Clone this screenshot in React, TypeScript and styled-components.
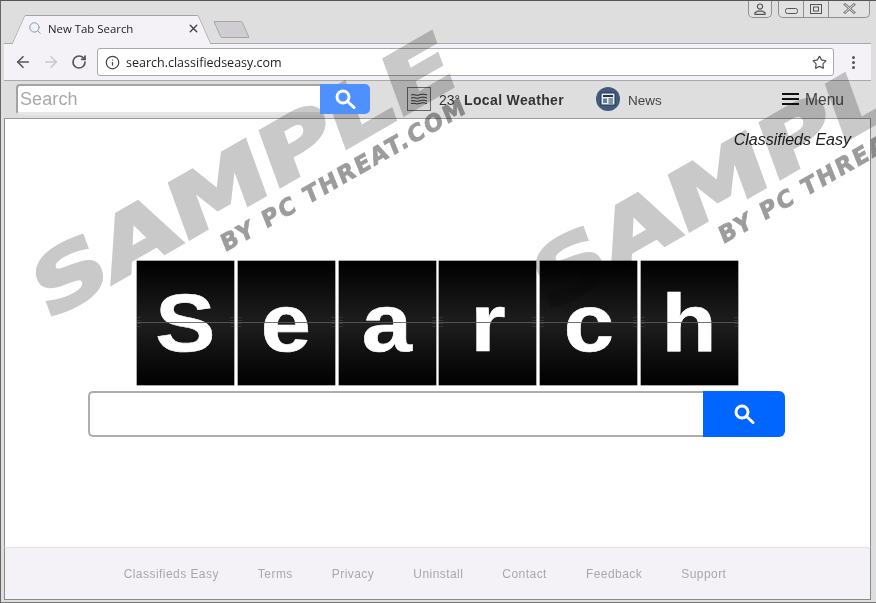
import React from "react";
import styled, { createGlobalStyle } from "styled-components";
import { ArrowLeft, ArrowRight, RotateCw, Info, Star, Search as SearchIcon, X } from "lucide-react";

const GlobalStyle = createGlobalStyle`
  html, body {
    margin: 0;
    padding: 0;
    background: #dedede;
  }
`;

const Window = styled.div`
  position: relative;
  width: 876px;
  height: 603px;
  box-sizing: border-box;
  overflow: hidden;
  display: flex;
  flex-direction: column;
  background: #dedede;
  border-top: 1px solid #555;
  border-left: 1px solid #666;
  border-bottom: 1px solid #777;
  font-family: "Liberation Sans", Arial, sans-serif;
`;

const TitleStrip = styled.div`
  height: 42px;
  flex: none;
  position: relative;
  display: flex;
  align-items: flex-end;
  padding-left: 21px;
  gap: 16px;
  box-sizing: border-box;
`;

const Tab = styled.div`
  position: relative;
  width: 179px;
  height: 28px;
  display: flex;
  align-items: center;
  gap: 6px;
  padding: 0 1px 2px 6px;
  box-sizing: border-box;
  z-index: 1;
  font-family: "Open Sans", sans-serif;
  font-size: 11.4px;
  color: #222;

  &::before,
  &::after {
    content: "";
    position: absolute;
    top: 0;
    bottom: -1px;
    width: 60%;
    background: #f5f2f7;
    border-top: 1px solid #a3a3a3;
    z-index: -1;
  }
  &::before {
    left: -4px;
    transform: skewX(-24deg);
    border-left: 1px solid #a3a3a3;
    border-radius: 2px 0 0 0;
  }
  &::after {
    right: -4px;
    transform: skewX(24deg);
    border-right: 1px solid #a3a3a3;
    border-radius: 0 2px 0 0;
  }
`;

const TabTitle = styled.span`
  flex: 1;
  white-space: nowrap;
`;

const NewTab = styled.div`
  width: 27px;
  height: 15px;
  margin-bottom: 5px;
  background: #cfcdd2;
  border: 1px solid #a6a6a6;
  border-radius: 2px;
  transform: skewX(24deg);
`;

const Controls = styled.div`
  position: absolute;
  top: -1px;
  right: 6px;
  display: flex;
  gap: 6px;
`;

const ControlGroup = styled.div`
  display: flex;
  height: 17px;
  border: 1px solid #8f8f8f;
  border-top: none;
  border-radius: 0 0 5px 5px;
  background: #e2e2e2;
`;

const ControlButton = styled.div<{ $width: number }>`
  width: ${(p) => p.$width}px;
  display: flex;
  align-items: center;
  justify-content: center;
  color: #555;

  & + & {
    border-left: 1px solid #8f8f8f;
  }
`;

const Toolbar = styled.div`
  height: 38px;
  flex: none;
  margin: 0 5px 0 3px;
  box-sizing: border-box;
  display: flex;
  align-items: center;
  background: #f5f2f7;
  border-top: 1px solid #a9a9a9;
  border-bottom: 1px solid #a9a9a9;
  padding: 0 0 0 9px;
  position: relative;
`;

const NavButton = styled.div<{ $mr: number }>`
  width: 20px;
  height: 20px;
  margin-right: ${(p) => p.$mr}px;
  display: flex;
  align-items: center;
  justify-content: center;
`;

const Omnibox = styled.div`
  width: 737px;
  height: 28px;
  box-sizing: border-box;
  background: #fff;
  border: 1px solid #a9a9a9;
  border-radius: 3px;
  display: flex;
  align-items: center;
  padding: 0 6px 0 7px;
  gap: 6px;
  font-family: "Open Sans", sans-serif;
  font-size: 12.5px;
  color: #222;
`;

const Url = styled.span`
  flex: 1;
`;

const Kebab = styled.div`
  margin-left: 18px;
  display: flex;
  flex-direction: column;
  gap: 2px;

  & > i {
    width: 3px;
    height: 3px;
    border-radius: 50%;
    background: #555;
  }
`;

const ExtBar = styled.div`
  height: 38px;
  flex: none;
  margin: 0 5px 0 3px;
  box-sizing: border-box;
  background: #dedede;
  border-bottom: 1px solid #9a9a9a;
  display: flex;
  align-items: center;
  padding: 0 27px 1px 12px;
`;

const BarInput = styled.div`
  width: 304px;
  height: 31px;
  box-sizing: border-box;
  background: #fff;
  border: 2px solid #a3a3a3;
  border-width: 2px 0 0 2px;
  border-bottom: 3px solid #e6e6e6;
  border-radius: 4px 0 0 4px;
  padding: 2px 0 0 2px;
  display: flex;
  align-items: center;
  font-size: 18px;
  font-weight: 400;
  color: #a9a9a9;
  letter-spacing: 0.1px;
`;

const BarButton = styled.div`
  position: relative;
  z-index: 6;
  width: 50px;
  height: 30px;
  margin-right: 37px;
  background: #4d90fe;
  border-radius: 0 5px 5px 0;
  display: flex;
  align-items: center;
  justify-content: center;
`;

const WeatherBox = styled.div`
  width: 24px;
  height: 24px;
  box-sizing: border-box;
  border: 1px solid #666;
  background: #d6d6d6;
  display: flex;
  align-items: center;
  justify-content: center;
  margin-right: 8px;
`;

const WeatherText = styled.div`
  position: relative;
  z-index: 6;
  font-size: 14px;
  color: #333;
  margin-right: 32px;
  padding-top: 1px;
  white-space: nowrap;

  & > b {
    letter-spacing: 0.35px;
  }
`;

const NewsBadge = styled.div`
  width: 24px;
  height: 24px;
  border-radius: 50%;
  background: #3f5b7c;
  display: flex;
  align-items: center;
  justify-content: center;
  margin-right: 8px;
`;

const NewsLabel = styled.span`
  font-size: 13.5px;
  color: #444;
  flex: 1;
  padding-top: 2px;
`;

const Burger = styled.div`
  display: flex;
  flex-direction: column;
  gap: 3px;
  margin-right: 6px;

  & > i {
    width: 17px;
    height: 2px;
    background: #111;
  }
`;

const MenuLabel = styled.span`
  font-size: 15.6px;
  color: #444;
  padding-top: 2px;
`;

const Main = styled.main`
  flex: 1;
  margin: 0 5px 0 3px;
  background: #fff;
  border-left: 1px solid #8a8a8a;
  border-right: 1px solid #8a8a8a;
  display: flex;
  flex-direction: column;
  align-items: center;
  position: relative;
`;

const Brand = styled.div`
  align-self: flex-end;
  margin: 12px 19px 0 0;
  font-size: 16px;
  font-style: italic;
  color: #222;
  line-height: 18px;
`;

const Tiles = styled.div`
  display: flex;
  gap: 3.8px;
  margin-top: 112px;
`;

const Tile = styled.div`
  position: relative;
  width: 97px;
  height: 124px;
  background: linear-gradient(180deg, #000 0%, #1e1e1e 50%, #000 100%);
  box-shadow: 0 0 0 0.5px #555;
  display: flex;
  align-items: center;
  justify-content: center;
  color: #fff;
  font-size: 82px;
  font-weight: 700;
  line-height: 124px;

  &::before {
    content: "";
    position: absolute;
    left: 0;
    right: 0;
    top: 56px;
    height: 11px;
    background:
      repeating-linear-gradient(180deg, #333 0 1px, transparent 1px 3px) left / 4px 100% no-repeat,
      repeating-linear-gradient(180deg, #333 0 1px, transparent 1px 3px) right / 4px 100% no-repeat;
  }

  &::after {
    content: "";
    position: absolute;
    left: 0;
    right: 0;
    top: 61px;
    height: 1px;
    background: rgba(90, 90, 90, 0.85);
  }
`;

const Glyph = styled.span`
  display: inline-block;
  transform: scaleX(1.1);
  -webkit-text-stroke: 0.6px #fff;
`;

const BigSearch = styled.div`
  width: 697px;
  height: 46px;
  margin: 6px 0 0 -2px;
  display: flex;
`;

const BigInput = styled.div`
  flex: 1;
  box-sizing: border-box;
  border: 2px solid #adadad;
  border-right: none;
  border-radius: 5px 0 0 5px;
  background: #fff;
`;

const BigButton = styled.div`
  width: 82px;
  background: #0066ff;
  border-radius: 0 6px 6px 0;
  display: flex;
  align-items: center;
  justify-content: center;
`;

const Footer = styled.footer`
  height: 53px;
  flex: none;
  margin: 0 5px 2px 3px;
  box-sizing: border-box;
  background: #f5f2f7;
  border: 1px solid #8a8a8a;
  border-top: 1px solid #e4e4e4;
  display: flex;
  align-items: center;
  justify-content: center;
  gap: 39px;
  font-size: 12px;
  letter-spacing: 0.45px;
  color: #a8a8a8;
  padding-right: 25px;
`;

const WatermarkLayer = styled.div`
  position: absolute;
  inset: 0;
  pointer-events: none;
  overflow: hidden;
  z-index: 5;
  mix-blend-mode: multiply;
`;

const WatermarkBig = styled.div<{ $x: number; $y: number }>`
  position: absolute;
  left: ${(p) => p.$x}px;
  top: ${(p) => p.$y}px;
  transform-origin: 0 100%;
  transform: rotate(-30deg) skewX(-10deg) scaleX(1.33);
  font-family: "DejaVu Sans", sans-serif;
  font-weight: 700;
  font-size: 80px;
  line-height: 80px;
  letter-spacing: -1px;
  color: #c9c9c9;
  -webkit-text-stroke: 3px #c9c9c9;
  white-space: nowrap;
`;

const WatermarkSmall = styled.div<{ $x: number; $y: number }>`
  position: absolute;
  left: ${(p) => p.$x}px;
  top: ${(p) => p.$y}px;
  transform-origin: 0 100%;
  transform: rotate(-30deg) skewX(-8deg);
  font-family: "DejaVu Sans", sans-serif;
  font-weight: 700;
  font-size: 23px;
  line-height: 26px;
  letter-spacing: 2.1px;
  color: #9c9c9c;
  -webkit-text-stroke: 0.8px #9c9c9c;
  white-space: nowrap;
`;

const LensIcon = () => (
  <svg width="21" height="20" viewBox="0 0 21 20" fill="none" stroke="#fff" strokeWidth="3">
    <circle cx="8" cy="8" r="6" />
    <path d="M12.5 12.5L19 18.5" strokeLinecap="round" />
  </svg>
);

const NewsIcon = () => (
  <svg width="16" height="14" viewBox="0 0 16 14">
    <rect x="1" y="1" width="14" height="12" fill="#e8eef4" stroke="#22364e" />
    <rect x="3" y="3" width="10" height="2" fill="#22364e" />
    <rect x="3" y="6.5" width="4" height="4.5" fill="#5f7fa3" />
    <path d="M8.5 7h4.5M8.5 9h4.5M8.5 11h4.5" stroke="#22364e" />
  </svg>
);

const WavesIcon = () => (
  <svg width="18" height="12" viewBox="0 0 18 12" fill="none" stroke="#333" strokeWidth="1">
    <path d="M1 2c3-1.4 5 1.2 8 0s5-1 8 0" />
    <path d="M1 5c3-1.4 5 1.2 8 0s5-1 8 0" />
    <path d="M1 8c3-1.4 5 1.2 8 0s5-1 8 0" />
    <path d="M1 10.6c3-1.4 5 1.2 8 0s5-1 8 0" />
  </svg>
);

const UserIcon = () => (
  <svg width="12" height="12" viewBox="0 0 12 12" fill="none" stroke="#555" strokeWidth="1.2">
    <circle cx="6" cy="3.6" r="2.6" />
    <path d="M1 11.4V9.6l2.8-1.4h4.4L11 9.6v1.8z" />
  </svg>
);

const CloseGlyph = () => (
  <svg width="13" height="11" viewBox="0 0 13 11" fill="none" strokeLinecap="square">
    <path d="M2 1.5l9 8M11 1.5l-9 8" stroke="#777" strokeWidth="2.6" />
    <path d="M2 1.5l9 8M11 1.5l-9 8" stroke="#e8e8e8" strokeWidth="1" />
  </svg>
);

const links = ["Classifieds Easy", "Terms", "Privacy", "Uninstall", "Contact", "Feedback", "Support"];

export default function App() {
  return (
    <>
      <GlobalStyle />
      <Window>
        <TitleStrip>
          <Tab>
            <SearchIcon size={14} color="#7b93a8" strokeWidth={1.6} />
            <TabTitle>New Tab Search</TabTitle>
            <X size={13} color="#444" strokeWidth={2.6} />
          </Tab>
          <NewTab />
          <Controls>
            <ControlGroup>
              <ControlButton $width={22}>
                <UserIcon />
              </ControlButton>
            </ControlGroup>
            <ControlGroup>
              <ControlButton $width={24}>
                <svg width="13" height="6" viewBox="0 0 13 6" style={{ marginTop: 5 }}>
                  <rect x="0.5" y="0.5" width="12" height="5" rx="2" fill="none" stroke="#555" />
                </svg>
              </ControlButton>
              <ControlButton $width={24}>
                <svg width="12" height="10" viewBox="0 0 12 10">
                  <rect x="0.5" y="0.5" width="11" height="9" fill="none" stroke="#555" />
                  <rect x="3.5" y="3" width="5" height="4" fill="none" stroke="#555" />
                </svg>
              </ControlButton>
              <ControlButton $width={40}>
                <CloseGlyph />
              </ControlButton>
            </ControlGroup>
          </Controls>
        </TitleStrip>

        <Toolbar>
          <NavButton $mr={8}>
            <ArrowLeft size={18} color="#555" strokeWidth={2.2} />
          </NavButton>
          <NavButton $mr={8}>
            <ArrowRight size={18} color="#c9c9c9" strokeWidth={2.2} />
          </NavButton>
          <NavButton $mr={8}>
            <RotateCw size={16} color="#555" strokeWidth={2.6} />
          </NavButton>
          <Omnibox>
            <Info size={15} color="#444" strokeWidth={2} />
            <Url>search.classifiedseasy.com</Url>
            <Star size={15} color="#555" strokeWidth={2} />
          </Omnibox>
          <Kebab>
            <i />
            <i />
            <i />
          </Kebab>
        </Toolbar>

        <ExtBar>
          <BarInput>Search</BarInput>
          <BarButton>
            <LensIcon />
          </BarButton>
          <WeatherBox>
            <WavesIcon />
          </WeatherBox>
          <WeatherText>
            23° <b>Local Weather</b>
          </WeatherText>
          <NewsBadge>
            <NewsIcon />
          </NewsBadge>
          <NewsLabel>News</NewsLabel>
          <Burger>
            <i />
            <i />
            <i />
          </Burger>
          <MenuLabel>Menu</MenuLabel>
        </ExtBar>

        <Main>
          <Brand>Classifieds Easy</Brand>
          <Tiles>
            {"Search".split("").map((letter, i) => (
              <Tile key={i}>
                <Glyph>{letter}</Glyph>
              </Tile>
            ))}
          </Tiles>
          <BigSearch>
            <BigInput />
            <BigButton>
              <LensIcon />
            </BigButton>
          </BigSearch>
        </Main>

        <Footer>
          {links.map((link) => (
            <span key={link}>{link}</span>
          ))}
        </Footer>

        <WatermarkLayer>
          <WatermarkBig $x={50} $y={253}>SAMPLE</WatermarkBig>
          <WatermarkSmall $x={226} $y={230}>BY PC THREAT.COM</WatermarkSmall>
          <WatermarkBig $x={550} $y={245}>SAMPLE</WatermarkBig>
          <WatermarkSmall $x={724} $y={222}>BY PC THREAT.COM</WatermarkSmall>
        </WatermarkLayer>
      </Window>
    </>
  );
}
